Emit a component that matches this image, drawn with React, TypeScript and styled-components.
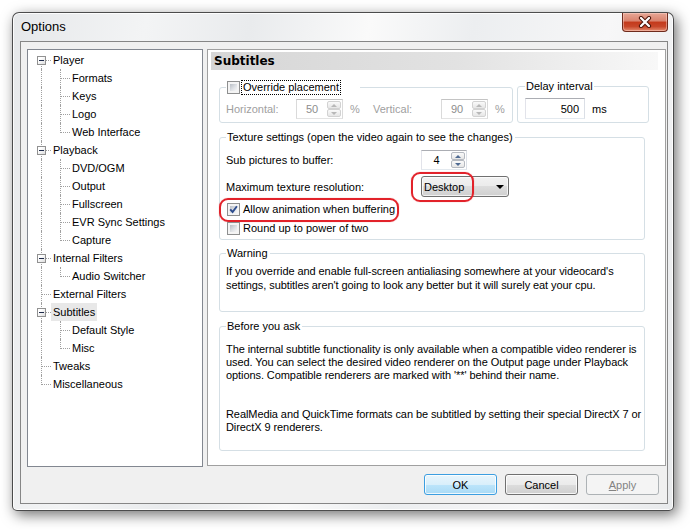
import React from 'react';
import styled, { createGlobalStyle, css } from 'styled-components';

const GlobalStyle = createGlobalStyle`
  html, body {
    margin: 0;
    padding: 0;
    background: #ffffff;
  }
  body {
    width: 690px;
    height: 530px;
    overflow: hidden;
    font-family: "Liberation Sans", Arial, sans-serif;
    font-size: 11px;
    color: #000;
  }
`;

const Desktop = styled.div`
  box-sizing: border-box;
  width: 690px;
  height: 530px;
  padding: 12px 0 0 12px;
`;

const Window = styled.div`
  box-sizing: border-box;
  width: 662px;
  height: 499px;
  display: flex;
  flex-direction: column;
  padding: 0 5px 6px 7px;
  border: 1px solid rgba(30, 30, 30, 0.78);
  border-radius: 7px 7px 5px 5px;
  background: linear-gradient(100deg, #e6e8ea 0%, #f3f4f5 18%, #e9ebed 32%, #fafafa 48%, #eceef0 62%, #f7f7f8 80%, #e8eaec 100%);
  box-shadow: inset 0 0 0 1px rgba(255, 255, 255, 0.85), 3px 4px 14px rgba(0, 0, 0, 0.55);
`;

const TitleBar = styled.div`
  display: flex;
  justify-content: space-between;
  align-items: flex-start;
  height: 28px;
  flex: none;
`;

const Title = styled.span`
  padding-left: 1px;
  line-height: 28px;
  font-size: 13px;
  color: #000;
`;

const CloseButton = styled.div`
  box-sizing: border-box;
  width: 46px;
  height: 19px;
  display: flex;
  align-items: center;
  justify-content: center;
  border: 1px solid #6e2a1c;
  border-top: none;
  border-radius: 0 0 4px 4px;
  background: linear-gradient(#e7a796 0%, #d9826d 45%, #c4391b 50%, #c8472a 75%, #e58c6f 100%);
  box-shadow: inset 0 0 0 1px rgba(255, 220, 210, 0.45);
`;

const Client = styled.div`
  flex: 1;
  display: flex;
  flex-direction: column;
  padding: 7px 1px 0 6px;
  border: 1px solid #868686;
  background: #f0f0f0;
`;

const MainRow = styled.div`
  display: flex;
  height: 418px;
`;

const Tree = styled.div`
  box-sizing: border-box;
  width: 176px;
  height: 418px;
  padding-top: 1px;
  border: 1px solid #828790;
  background: #fff;
`;

const TreeRow = styled.div`
  display: flex;
  height: 18px;
  padding-left: 4px;
`;

type VLine = 'full' | 'top' | 'bottom' | 'none';

const Gutter = styled.span<{ $v: VLine; $h?: boolean }>`
  position: relative;
  flex: none;
  width: 19px;
  height: 18px;

  &::before {
    content: '';
    display: ${p => (p.$v === 'none' ? 'none' : 'block')};
    position: absolute;
    left: 9px;
    top: ${p => (p.$v === 'bottom' ? 9 : 0)}px;
    height: ${p => (p.$v === 'full' ? 18 : p.$v === 'top' ? 10 : 9)}px;
    border-left: 1px dotted #a0a0a0;
  }

  &::after {
    content: '';
    display: ${p => (p.$h ? 'block' : 'none')};
    position: absolute;
    left: 10px;
    right: 0;
    top: 9px;
    border-top: 1px dotted #a0a0a0;
  }
`;

const Expander = styled.span`
  position: absolute;
  z-index: 1;
  left: 5px;
  top: 5px;
  box-sizing: border-box;
  width: 9px;
  height: 9px;
  border: 1px solid #919191;
  background: linear-gradient(135deg, #ffffff 30%, #dcdcdc);

  &::after {
    content: '';
    position: absolute;
    left: 1px;
    top: 3px;
    width: 5px;
    height: 1px;
    background: #1e2a4a;
  }
`;

const NodeLabel = styled.span<{ $selected?: boolean }>`
  padding: 0 2px;
  line-height: 18px;
  white-space: nowrap;
  color: #000;
  background: ${p => (p.$selected ? '#e8e8e8' : 'transparent')};
`;

const Page = styled.div`
  box-sizing: border-box;
  flex: 1;
  height: 417px;
  margin-left: 4px;
  display: flex;
  flex-direction: column;
  border: 1px solid #a0a0a0;
  background: #fff;
`;

const PageHeader = styled.div`
  height: 18px;
  margin: 2px 7px 0 3px;
  padding-left: 3px;
  line-height: 18px;
  font-family: "DejaVu Sans", Verdana, sans-serif;
  font-size: 12px;
  font-weight: bold;
  color: #000;
  background: linear-gradient(to right, #d6d6d6 0%, #e2e2e2 55%, #f8f8f8 100%);
`;

const PageBody = styled.div`
  display: flex;
  flex-direction: column;
  padding: 0 16px 0 11px;
`;

const TopRow = styled.div`
  display: flex;
  gap: 4px;
  margin-top: 10px;
`;

const Group = styled.fieldset<{ $width: number; $gap?: number; $bottom?: number; $pad?: number }>`
  box-sizing: border-box;
  width: ${p => p.$width}px;
  min-width: 0;
  margin: ${p => p.$gap ?? 0}px 0 0 0;
  padding: 0 ${p => p.$pad ?? 6}px ${p => p.$bottom ?? 3}px;
  border: 1px solid #d5dfe5;
  border-radius: 3px;
`;

const Legend = styled.legend<{ $padRight?: number }>`
  display: flex;
  align-items: center;
  padding: 0 ${p => p.$padRight ?? 1}px 0 1px;
  line-height: 13px;
  color: #000;
  white-space: nowrap;
`;

const FieldRow = styled.div<{ $h: number; $gap?: number }>`
  display: flex;
  align-items: center;
  height: ${p => p.$h}px;
  margin-top: ${p => p.$gap ?? 0}px;
  white-space: nowrap;
`;

const FieldLabel = styled.span<{ $w?: number; $disabled?: boolean; $ml?: number }>`
  flex: none;
  width: ${p => (p.$w ? `${p.$w}px` : 'auto')};
  margin-left: ${p => p.$ml ?? 0}px;
  color: ${p => (p.$disabled ? '#a0a0a0' : '#000')};
`;

const SpinBox = styled.div<{ $width: number; $height?: number; $disabled?: boolean }>`
  box-sizing: border-box;
  flex: none;
  display: flex;
  width: ${p => p.$width}px;
  height: ${p => p.$height ?? 20}px;
  border: 1px solid;
  border-color: ${p => (p.$disabled ? '#c4c4c4 #dadada #e3e3e3 #dadada' : '#abadb3 #dbdfe6 #e3e9ef #e2e3ea')};
  background: #fff;
`;

const SpinText = styled.span<{ $disabled?: boolean; $align?: 'center' | 'right' }>`
  flex: 1;
  align-self: center;
  text-align: ${p => p.$align ?? 'center'};
  padding-right: ${p => (p.$align === 'right' ? 5 : 0)}px;
  color: ${p => (p.$disabled ? '#8d8d8d' : '#000')};
`;

const SpinButtons = styled.div`
  display: flex;
  flex-direction: column;
  width: 15px;
  padding: 1px 1px 1px 0;
  box-sizing: border-box;
`;

const SpinArrow = styled.span<{ $down?: boolean; $disabled?: boolean }>`
  flex: 1;
  display: flex;
  align-items: center;
  justify-content: center;
  border: 1px solid ${p => (p.$disabled ? '#d2d2d2' : '#b5b9c0')};
  border-radius: 2px;
  background: linear-gradient(#fafafa, #e6e6e6);

  &::after {
    content: '';
    width: 0;
    height: 0;
    border-left: 3px solid transparent;
    border-right: 3px solid transparent;
    ${p =>
      p.$down
        ? css`border-top: 3px solid ${p.$disabled ? '#b8b8b8' : '#4f6a92'};`
        : css`border-bottom: 3px solid ${p.$disabled ? '#b8b8b8' : '#4f6a92'};`}
  }
`;

const CheckBox = styled.span`
  position: relative;
  flex: none;
  box-sizing: border-box;
  width: 13px;
  height: 13px;
  display: flex;
  align-items: center;
  justify-content: center;
  border: 1px solid #8e8f8f;
  background: #f4f4f4;

  &::before {
    content: '';
    position: absolute;
    inset: 2px;
    background: linear-gradient(135deg, #b9bec5 0%, #dfe2e6 55%, #f7f7f7 100%);
  }

  svg {
    position: relative;
  }
`;

const CheckRow = styled.span`
  display: inline-flex;
  align-items: center;
  padding-left: 1px;
`;

const CheckText = styled.span<{ $focused?: boolean }>`
  margin-left: 1px;
  padding: 0 1px;
  line-height: 13px;
  border: 1px dotted ${p => (p.$focused ? '#000' : 'transparent')};
  color: #000;
`;

const Combo = styled.div`
  box-sizing: border-box;
  width: 88px;
  height: 21px;
  display: flex;
  align-items: center;
  justify-content: space-between;
  padding: 0 4px 0 2px;
  border: 1px solid #707070;
  border-radius: 3px;
  background: linear-gradient(#f2f2f2 0%, #ebebeb 50%, #dddddd 50%, #cfcfcf 100%);
  box-shadow: inset 0 0 0 1px rgba(255, 255, 255, 0.7);
  color: #000;

  &::after {
    content: '';
    border-left: 4px solid transparent;
    border-right: 4px solid transparent;
    border-top: 4px solid #000;
  }
`;

/* red annotation drawn over a control */
const Mark = styled.span<{ $l: number; $t: number; $w: number; $h: number }>`
  position: relative;
  display: inline-flex;
  align-items: center;

  &::after {
    content: '';
    position: absolute;
    left: ${p => p.$l}px;
    top: ${p => p.$t}px;
    width: ${p => p.$w}px;
    height: ${p => p.$h}px;
    box-sizing: border-box;
    border: 2px solid #e2222a;
    border-radius: 9px;
    box-shadow: 0 0 1px rgba(226, 34, 42, 0.6);
    pointer-events: none;
  }
`;

const Note = styled.p<{ $lh: number; $gap: number }>`
  margin: ${p => p.$gap}px 0 0 0;
  line-height: ${p => p.$lh}px;
  letter-spacing: -0.08px;
  white-space: nowrap;
  color: #000;
`;

const ButtonRow = styled.div`
  display: flex;
  justify-content: flex-end;
  gap: 8px;
  margin-top: 7px;
  padding-right: 7px;
`;

const Button = styled.div<{ $kind: 'default' | 'normal' | 'disabled' }>`
  box-sizing: border-box;
  width: 73px;
  height: 21px;
  display: flex;
  align-items: center;
  justify-content: center;
  border-radius: 3px;
  border: 1px solid;
  ${p =>
    p.$kind === 'default'
      ? css`
          border-color: #3c9ee0;
          background: linear-gradient(#e8f5fc 0%, #d9effb 50%, #bde5fb 50%, #a9daf5 100%);
          box-shadow: inset 0 0 0 1px rgba(255, 255, 255, 0.8);
          color: #000;
        `
      : p.$kind === 'normal'
      ? css`
          border-color: #707070;
          background: linear-gradient(#f2f2f2 0%, #ebebeb 50%, #dddddd 50%, #cfcfcf 100%);
          box-shadow: inset 0 0 0 1px rgba(255, 255, 255, 0.8);
          color: #000;
        `
      : css`
          border-color: #adb2b5;
          background: #f4f4f4;
          color: #838383;
        `}

  u {
    text-decoration: underline;
  }
`;

const Check = ({ checked }: { checked?: boolean }) => (
  <CheckBox>
    {checked && (
      <svg width="9" height="9" viewBox="0 0 9 9">
        <path d="M1.2 4.4 L3.6 7 L7.9 1.3" fill="none" stroke="#2d4d8e" strokeWidth="1.9" />
      </svg>
    )}
  </CheckBox>
);

const Spin = ({ value, width, disabled }: { value: string; width: number; disabled?: boolean }) => (
  <SpinBox $width={width} $disabled={disabled}>
    <SpinText $disabled={disabled}>{value}</SpinText>
    <SpinButtons>
      <SpinArrow $disabled={disabled} />
      <SpinArrow $down $disabled={disabled} />
    </SpinButtons>
  </SpinBox>
);

type Node = { label: string; children?: string[]; selected?: boolean };

const tree: Node[] = [
  { label: 'Player', children: ['Formats', 'Keys', 'Logo', 'Web Interface'] },
  { label: 'Playback', children: ['DVD/OGM', 'Output', 'Fullscreen', 'EVR Sync Settings', 'Capture'] },
  { label: 'Internal Filters', children: ['Audio Switcher'] },
  { label: 'External Filters' },
  { label: 'Subtitles', children: ['Default Style', 'Misc'], selected: true },
  { label: 'Tweaks' },
  { label: 'Miscellaneous' },
];

const TreeView = () => (
  <Tree>
    {tree.map((node, i) => {
      const last = i === tree.length - 1;
      const v: VLine = i === 0 ? 'bottom' : last ? 'top' : 'full';
      return (
        <React.Fragment key={node.label}>
          <TreeRow>
            <Gutter $v={v} $h>
              {node.children && <Expander />}
            </Gutter>
            <NodeLabel $selected={node.selected}>{node.label}</NodeLabel>
          </TreeRow>
          {node.children?.map((child, j) => (
            <TreeRow key={child}>
              <Gutter $v={last ? 'none' : 'full'} />
              <Gutter $v={j === node.children!.length - 1 ? 'top' : 'full'} $h />
              <NodeLabel>{child}</NodeLabel>
            </TreeRow>
          ))}
        </React.Fragment>
      );
    })}
  </Tree>
);

export default function App() {
  return (
    <>
      <GlobalStyle />
      <Desktop>
        <Window>
          <TitleBar>
            <Title>Options</Title>
            <CloseButton>
              <svg width="14" height="12" viewBox="0 0 14 12">
                <path d="M3 2 L11 10 M11 2 L3 10" stroke="#4a1208" strokeWidth="4.2" strokeLinecap="round" />
                <path d="M3 2 L11 10 M11 2 L3 10" stroke="#ffffff" strokeWidth="2.3" strokeLinecap="round" />
              </svg>
            </CloseButton>
          </TitleBar>
          <Client>
            <MainRow>
              <TreeView />
              <Page>
                <PageHeader>Subtitles</PageHeader>
                <PageBody>
                  <TopRow>
                    <Group $width={294}>
                      <Legend $padRight={19}>
                        <Check />
                        <CheckText $focused>Override placement</CheckText>
                      </Legend>
                      <FieldRow $h={20} $gap={4}>
                        <FieldLabel $w={70} $disabled>Horizontal:</FieldLabel>
                        <Spin value="50" width={47} disabled />
                        <FieldLabel $w={23} $ml={7} $disabled>%</FieldLabel>
                        <FieldLabel $w={68} $disabled>Vertical:</FieldLabel>
                        <Spin value="90" width={47} disabled />
                        <FieldLabel $ml={7} $disabled>%</FieldLabel>
                      </FieldRow>
                    </Group>
                    <Group $width={132} $pad={7}>
                      <Legend>Delay interval</Legend>
                      <FieldRow $h={21} $gap={5}>
                        <SpinBox $width={60} $height={21}>
                          <SpinText $align="right">500</SpinText>
                        </SpinBox>
                        <FieldLabel $ml={7}>ms</FieldLabel>
                      </FieldRow>
                    </Group>
                  </TopRow>

                  <Group $width={426} $gap={8} $bottom={3}>
                    <Legend $padRight={2}>Texture settings (open the video again to see the changes)</Legend>
                    <FieldRow $h={20} $gap={6}>
                      <FieldLabel $w={195}>Sub pictures to buffer:</FieldLabel>
                      <Spin value="4" width={46} />
                    </FieldRow>
                    <FieldRow $h={21} $gap={6}>
                      <FieldLabel $w={195}>Maximum texture resolution:</FieldLabel>
                      <Mark $l={-10} $t={-4} $w={63} $h={30}>
                        <Combo>Desktop</Combo>
                      </Mark>
                    </FieldRow>
                    <FieldRow $h={16} $gap={4}>
                      <Mark $l={-7} $t={-4} $w={180} $h={24}>
                        <CheckRow>
                          <Check checked />
                          <CheckText>Allow animation when buffering</CheckText>
                        </CheckRow>
                      </Mark>
                    </FieldRow>
                    <FieldRow $h={16} $gap={3}>
                      <CheckRow>
                        <Check />
                        <CheckText>Round up to power of two</CheckText>
                      </CheckRow>
                    </FieldRow>
                  </Group>

                  <Group $width={426} $gap={7} $bottom={19}>
                    <Legend $padRight={2}>Warning</Legend>
                    <Note $lh={14} $gap={4}>
                      If you override and enable full-screen antialiasing somewhere at your videocard's
                      <br />
                      settings, subtitles aren't going to look any better but it will surely eat your cpu.
                    </Note>
                  </Group>

                  <Group $width={426} $gap={8} $bottom={16}>
                    <Legend $padRight={2}>Before you ask</Legend>
                    <Note $lh={13} $gap={10}>
                      The internal subtitle functionality is only available when a compatible video renderer is
                      <br />
                      used. You can select the desired video renderer on the Output page under Playback
                      <br />
                      options. Compatible renderers are marked with '**' behind their name.
                      <br />
                      <br />
                      <br />
                      RealMedia and QuickTime formats can be subtitled by setting their special DirectX 7 or
                      <br />
                      DirectX 9 renderers.
                    </Note>
                  </Group>
                </PageBody>
              </Page>
            </MainRow>
            <ButtonRow>
              <Button $kind="default">OK</Button>
              <Button $kind="normal">Cancel</Button>
              <Button $kind="disabled">
                <span>
                  <u>A</u>pply
                </span>
              </Button>
            </ButtonRow>
          </Client>
        </Window>
      </Desktop>
    </>
  );
}
